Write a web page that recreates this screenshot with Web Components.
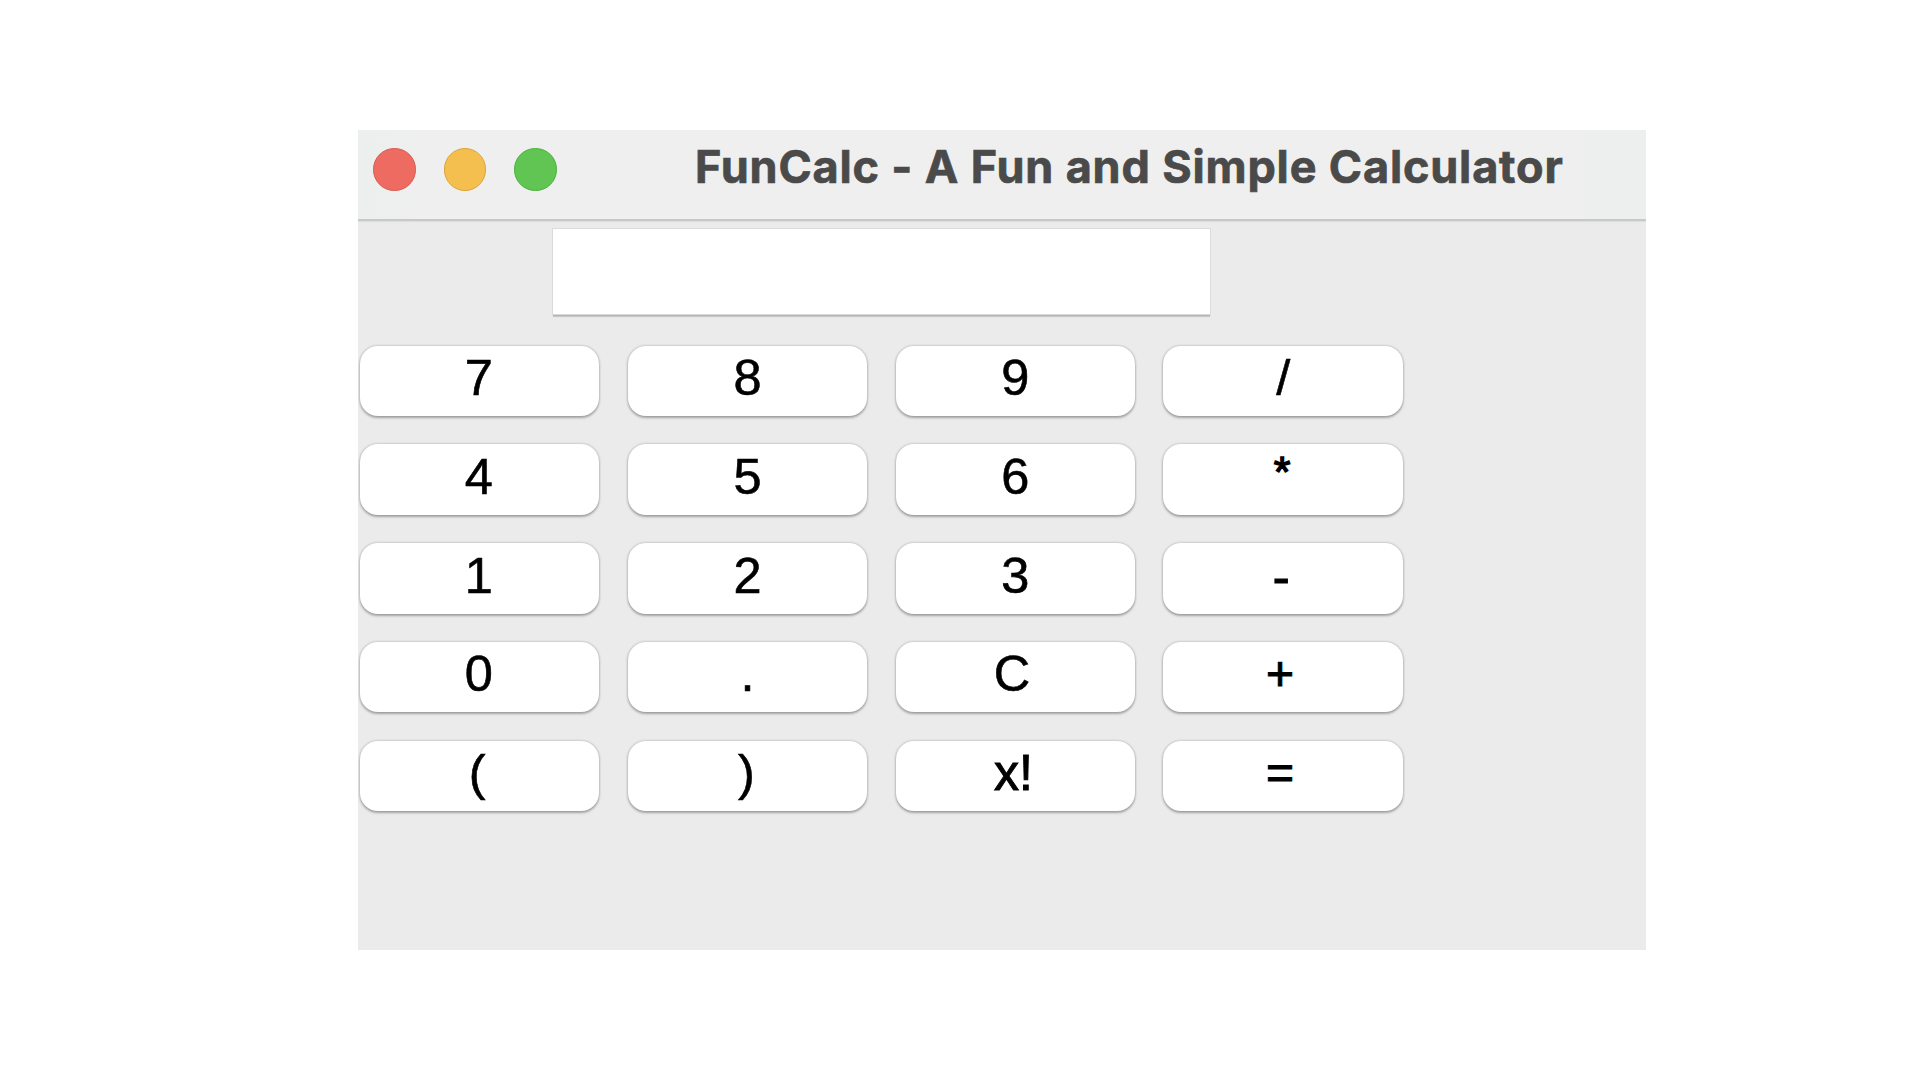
<!DOCTYPE html>
<html lang="en"><head><meta charset="utf-8"><title>FunCalc</title>
<style>
html,body{margin:0;background:#fff}
body{width:1920px;height:1080px;overflow:hidden;padding:130px 0 0 358px;box-sizing:border-box}
</style></head><body>
<fun-window heading="FunCalc - A Fun and Simple Calculator">
  <fun-display></fun-display>
  <fun-keypad></fun-keypad>
</fun-window>
<script>
class FunWindow extends HTMLElement{
  constructor(){super();
    this.attachShadow({mode:'open'}).innerHTML=`<style>
:host{display:flex;flex-direction:column;width:1288px;height:820px;background:#ebebeb;overflow:hidden}
header{height:90.5px;box-sizing:border-box;flex:none;display:flex;align-items:flex-start;background:linear-gradient(90deg,#edefee 0,#efefef 110px,#efefef 1220px,#edefee 1230px);border-bottom:2px solid #c8c8c8;box-shadow:0 1px 1px #dedede}
.lights{display:flex;gap:28px;padding:18px 0 0 15.2px;flex:none}
i{width:42.5px;height:42.5px;box-sizing:border-box;border-radius:50%;border:1.5px solid}
.r{background:#ed6b60;border-color:#dc5b51}.y{background:#f5bf4f;border-color:#dca43f}.g{background:#61c554;border-color:#4fb03e}
h1{margin:0;padding:10px 0 0 138.3px;font:700 45px/54px Inter,sans-serif;font-feature-settings:"calt" 0;color:#4a4a4a;white-space:nowrap;letter-spacing:.84px;-webkit-text-stroke:.7px #4a4a4a}
main{display:flex;flex-direction:column;align-items:flex-start}
</style><header><div class="lights"><i class="r"></i><i class="y"></i><i class="g"></i></div><h1></h1></header><main><slot></slot></main>`;
  }
  connectedCallback(){this.shadowRoot.querySelector('h1').textContent=this.getAttribute('heading')}
}
class FunDisplay extends HTMLElement{
  constructor(){super();
    this.attachShadow({mode:'open'}).innerHTML=`<style>
:host{display:block;margin:8.5px 0 0 195px;width:656.5px;height:85px;background:#fff;box-shadow:0 0 0 1px #dadada,0 2px 0 0 #b4b4b4,0 3px 1px 0 #c8c8c8}
</style>`;
  }
}
class FunKey extends HTMLElement{
  constructor(){super();
    this.attachShadow({mode:'open'}).innerHTML=`<style>
:host{display:flex;justify-content:center;align-items:flex-start;box-sizing:border-box;width:239.5px;height:70.5px;border-radius:18px;background:#fff;box-shadow:0 0 3px rgba(0,0,0,.2),0 1.5px 2.5px rgba(0,0,0,.28);font:50.5px/58px "Liberation Sans",Arial,sans-serif;color:#000}
span{display:block;font-size:var(--size,50.5px);margin-top:calc(3.5px + var(--drop,0)*1px);margin-left:calc(var(--nudge,0)*2px);-webkit-text-stroke:var(--ink,.6px) #000}
</style><span><slot></slot></span>`;
  }
}
class FunKeypad extends HTMLElement{
  constructor(){super();
    const keys=['7','8','9','/','4','5','6','*','1','2','3','-','0','.','C','+','(',')','x!','='];
    const tune={
      'C':'--nudge:-3.3','x!':'--nudge:-1.8;--size:50px;--ink:1px','(':'--nudge:-2.3',')':'--nudge:-1',
      '7':'--nudge:-.7','4':'--nudge:-.7','1':'--nudge:-.7','0':'--nudge:-.7',
      '+':'--nudge:-3.2;--size:48px;--drop:-.5;--ink:1px','=':'--nudge:-3.2;--size:48px;--drop:-.5;--ink:1px',
      '-':'--nudge:-2.1;--drop:1;--ink:1.2px','*':'--nudge:-1;--size:43px;--drop:-5.5;--ink:1.4px'};
    this.attachShadow({mode:'open'}).innerHTML=`<style>
:host{display:grid;grid-template-columns:repeat(4,239.5px);column-gap:28.4px;row-gap:28.3px;margin:31.5px 0 0 1.8px}
</style>`+keys.map(k=>`<fun-key style="${tune[k]||''}">${k}</fun-key>`).join('');
  }
}
customElements.define('fun-key',FunKey);
customElements.define('fun-keypad',FunKeypad);
customElements.define('fun-display',FunDisplay);
customElements.define('fun-window',FunWindow);
</script></body></html>
